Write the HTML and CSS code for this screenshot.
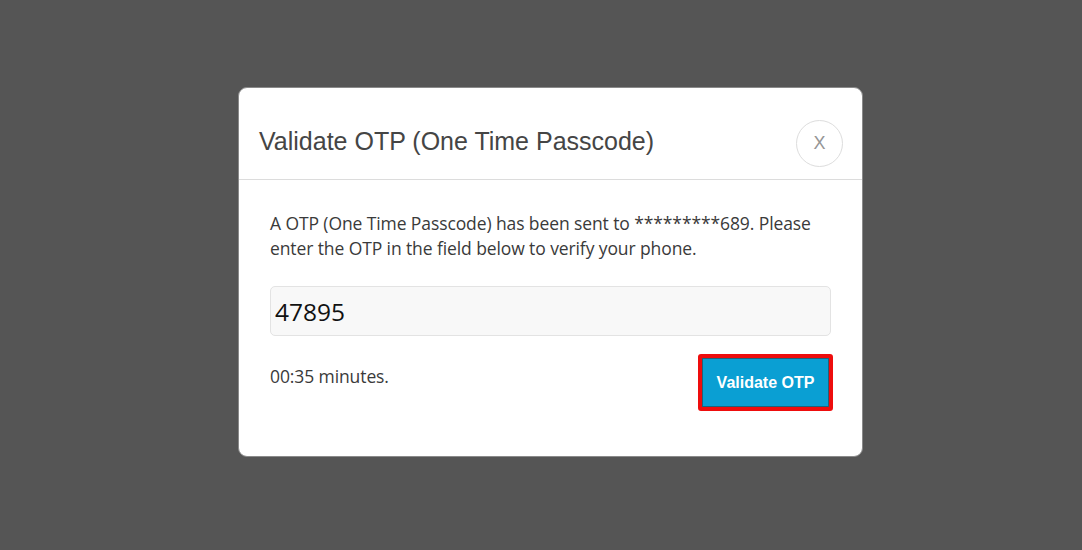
FILE: index.html
```html
<!DOCTYPE html>
<html lang="en">
<head>
<meta charset="utf-8">
<title>Validate OTP</title>
<link rel="stylesheet" href="styles.css">
</head>
<body>
<div class="overlay">
  <div class="modal">
    <div class="modal-header">
      <h2 class="modal-title">Validate OTP (One Time Passcode)</h2>
      <button class="close-btn" type="button">X</button>
    </div>
    <div class="modal-body">
      <p class="message">A OTP (One Time Passcode) has been sent to *********689. Please enter the OTP in the field below to verify your phone.</p>
      <input class="otp-input" type="text" value="47895">
      <div class="action-row">
        <span class="timer">00:35 minutes.</span>
        <div class="highlight">
          <button class="validate-btn" type="button">Validate OTP</button>
        </div>
      </div>
    </div>
  </div>
</div>
</body>
</html>
```
FILE: styles.css
```css
html, body {
  margin: 0;
  padding: 0;
}
body {
  background: #555555;
  width: 1082px;
  height: 550px;
  overflow: hidden;
}
.overlay {
  padding-top: 87px;
  padding-left: 238px;
}
.modal {
  box-sizing: border-box;
  width: 625px;
  height: 370px;
  background: #ffffff;
  border: 1px solid #8a8a8a;
  border-radius: 9px;
}
.modal-header {
  display: flex;
  justify-content: space-between;
  align-items: flex-start;
  height: 92px;
  box-sizing: border-box;
  padding: 32px 19px 0 20px;
  border-bottom: 1px solid #dcdcdc;
}
.modal-title {
  margin: 7px 0 0 0;
  font-family: "Liberation Sans", Arial, sans-serif;
  font-weight: normal;
  font-size: 25px;
  line-height: 28px;
  color: #454545;
}
.close-btn {
  width: 47px;
  height: 47px;
  border-radius: 50%;
  border: 1px solid #dddddd;
  background: #ffffff;
  color: #959595;
  font-family: "Liberation Sans", Arial, sans-serif;
  font-size: 18px;
  padding: 0;
  display: flex;
  align-items: center;
  justify-content: center;
}
.modal-body {
  padding: 31px 31px 0 31px;
  font-family: "Open Sans", sans-serif;
  color: #3a3a3a;
}
.message {
  margin: 0;
  font-size: 17.5px;
  letter-spacing: -0.1px;
  line-height: 25px;
}
.otp-input {
  display: block;
  box-sizing: border-box;
  width: 100%;
  height: 50px;
  margin-top: 25px;
  padding: 0 4px;
  border: 1px solid #e3e3e3;
  border-radius: 5px;
  background: #f8f8f8;
  font-family: "Open Sans", sans-serif;
  font-size: 24.5px;
  color: #111111;
  outline: none;
}
.action-row {
  display: flex;
  justify-content: space-between;
  align-items: flex-start;
  margin-top: 18px;
}
.timer {
  font-size: 17.5px;
  letter-spacing: -0.1px;
  line-height: 25px;
  margin-top: 10px;
}
.highlight {
  border: 4px solid #ee0d0d;
  border-radius: 3px;
  margin-right: -2px;
}
.validate-btn {
  display: block;
  box-sizing: border-box;
  width: 127px;
  height: 49px;
  border: 1px solid #20627a;
  background: #0a9fd3;
  color: #ffffff;
  font-family: "Liberation Sans", Arial, sans-serif;
  font-weight: bold;
  font-size: 16px;
  padding: 0;
}
```
